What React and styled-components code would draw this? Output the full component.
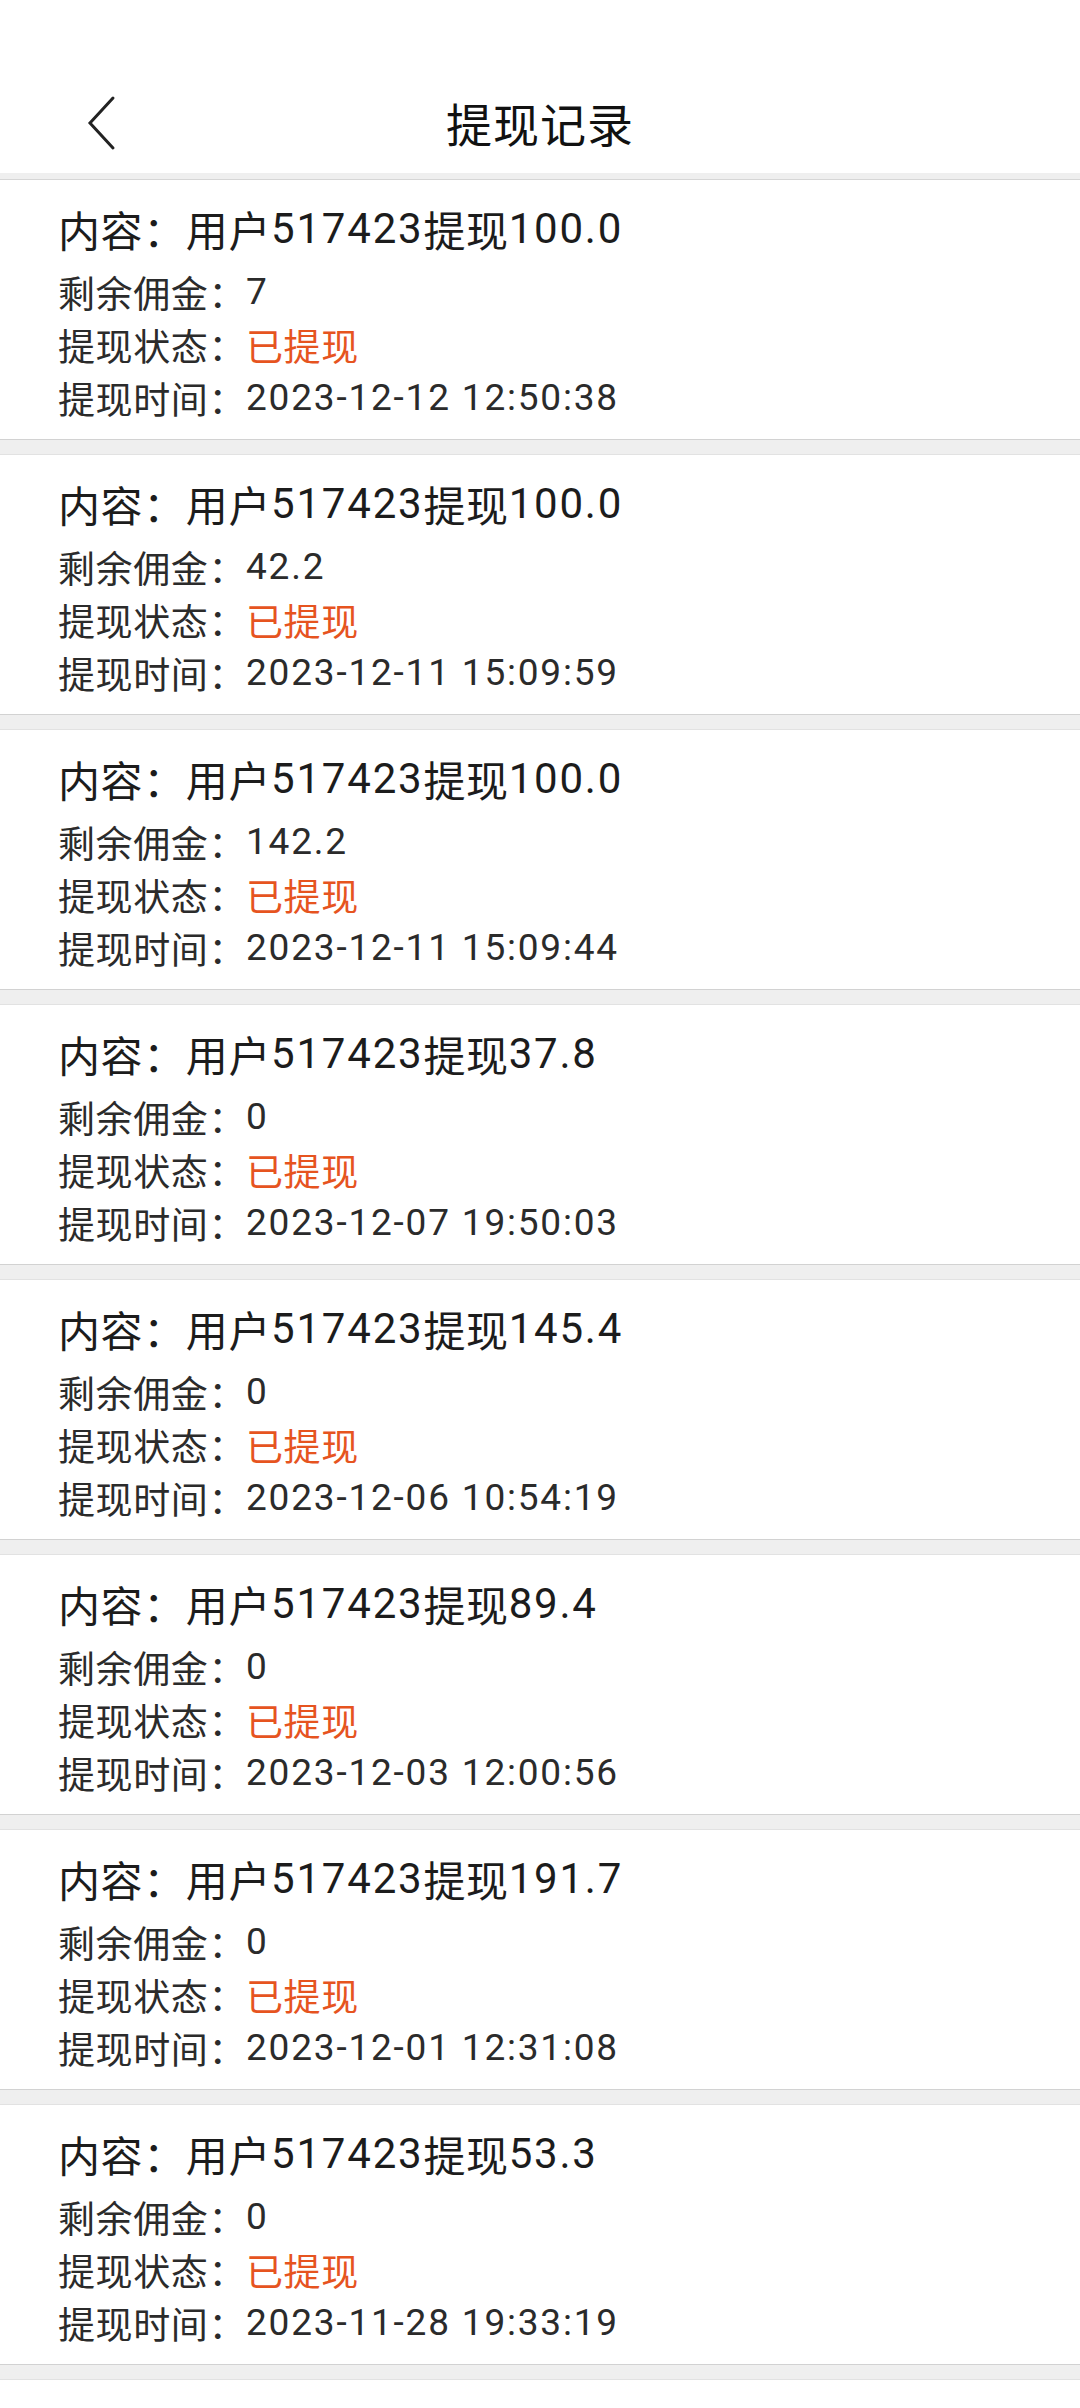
import React from "react";
import styled, { createGlobalStyle } from "styled-components";

const GlobalStyle = createGlobalStyle`
  body {
    margin: 0;
    background: #ffffff;
    font-family: Roboto, "Noto Sans CJK SC", sans-serif;
  }
`;

const Page = styled.div`
  width: 1080px;
  min-height: 2408px;
  background: #ffffff;
`;

const Header = styled.header`
  position: relative;
  display: flex;
  align-items: center;
  justify-content: center;
  height: 103px;
  padding-top: 70px;
  background: #ffffff;
`;

const BackButton = styled.button`
  position: absolute;
  left: 80px;
  top: 88px;
  width: 44px;
  height: 68px;
  padding: 0;
  border: 0;
  background: none;
  display: flex;
  align-items: center;
  justify-content: center;
`;

const Title = styled.h1`
  margin: 0;
  font-family: "Noto Sans CJK SC", sans-serif;
  font-size: 46px;
  font-weight: 400;
  color: #111111;
  letter-spacing: 1px;
`;

const HeaderShade = styled.div`
  height: 6px;
  background: #efefef;
  border-bottom: 1px solid #d6d6d6;
`;

const List = styled.div`
  display: flex;
  flex-direction: column;
`;

const Card = styled.div`
  height: 259px;
  box-sizing: border-box;
  padding: 18px 0 15px 58px;
  background: #ffffff;
  display: flex;
  flex-direction: column;
`;

const Separator = styled.div`
  height: 14px;
  background: #efefef;
  border-top: 1px solid #d2d2d2;
  border-bottom: 1px solid #e2e2e2;
`;

const Headline = styled.div`
  height: 60px;
  margin-bottom: 7px;
  display: flex;
  align-items: center;
  font-size: 42px;
  color: #1c1c1c;
  letter-spacing: 0.6px;
  white-space: nowrap;
`;

const Row = styled.div`
  height: 53px;
  display: flex;
  align-items: center;
  font-size: 37px;
  color: #2b2b2b;
  letter-spacing: 0.6px;
  white-space: nowrap;
`;

const Num = styled.span`
  letter-spacing: 1.8px;
`;

const Value = styled.span`
  color: ${(p) => (p.$accent ? "#e6541f" : "inherit")};
  letter-spacing: ${(p) => (p.$accent ? "0.6px" : "1.8px")};
`;

const records = [
  { amount: "100.0", left: "7", time: "2023-12-12 12:50:38" },
  { amount: "100.0", left: "42.2", time: "2023-12-11 15:09:59" },
  { amount: "100.0", left: "142.2", time: "2023-12-11 15:09:44" },
  { amount: "37.8", left: "0", time: "2023-12-07 19:50:03" },
  { amount: "145.4", left: "0", time: "2023-12-06 10:54:19" },
  { amount: "89.4", left: "0", time: "2023-12-03 12:00:56" },
  { amount: "191.7", left: "0", time: "2023-12-01 12:31:08" },
  { amount: "53.3", left: "0", time: "2023-11-28 19:33:19" },
];

const App = () => {
  return (
    <Page>
      <GlobalStyle />
      <Header>
        <BackButton aria-label="返回">
          <svg width="40" height="60" viewBox="0 0 40 60">
            <path
              d="M31 6 L8 31 L31 56"
              fill="none"
              stroke="#222"
              strokeWidth="3"
              strokeLinecap="round"
              strokeLinejoin="miter"
            />
          </svg>
        </BackButton>
        <Title>提现记录</Title>
      </Header>
      <HeaderShade />
      <List>
        {records.map((r, i) => (
          <React.Fragment key={i}>
            <Card>
              <Headline>
                内容：用户<Num>517423</Num>提现<Num>{r.amount}</Num>
              </Headline>
              <Row>
                剩余佣金：<Value>{r.left}</Value>
              </Row>
              <Row>
                提现状态：<Value $accent>已提现</Value>
              </Row>
              <Row>
                提现时间：<Value>{r.time}</Value>
              </Row>
            </Card>
            <Separator />
          </React.Fragment>
        ))}
      </List>
    </Page>
  );
};

export default App;
